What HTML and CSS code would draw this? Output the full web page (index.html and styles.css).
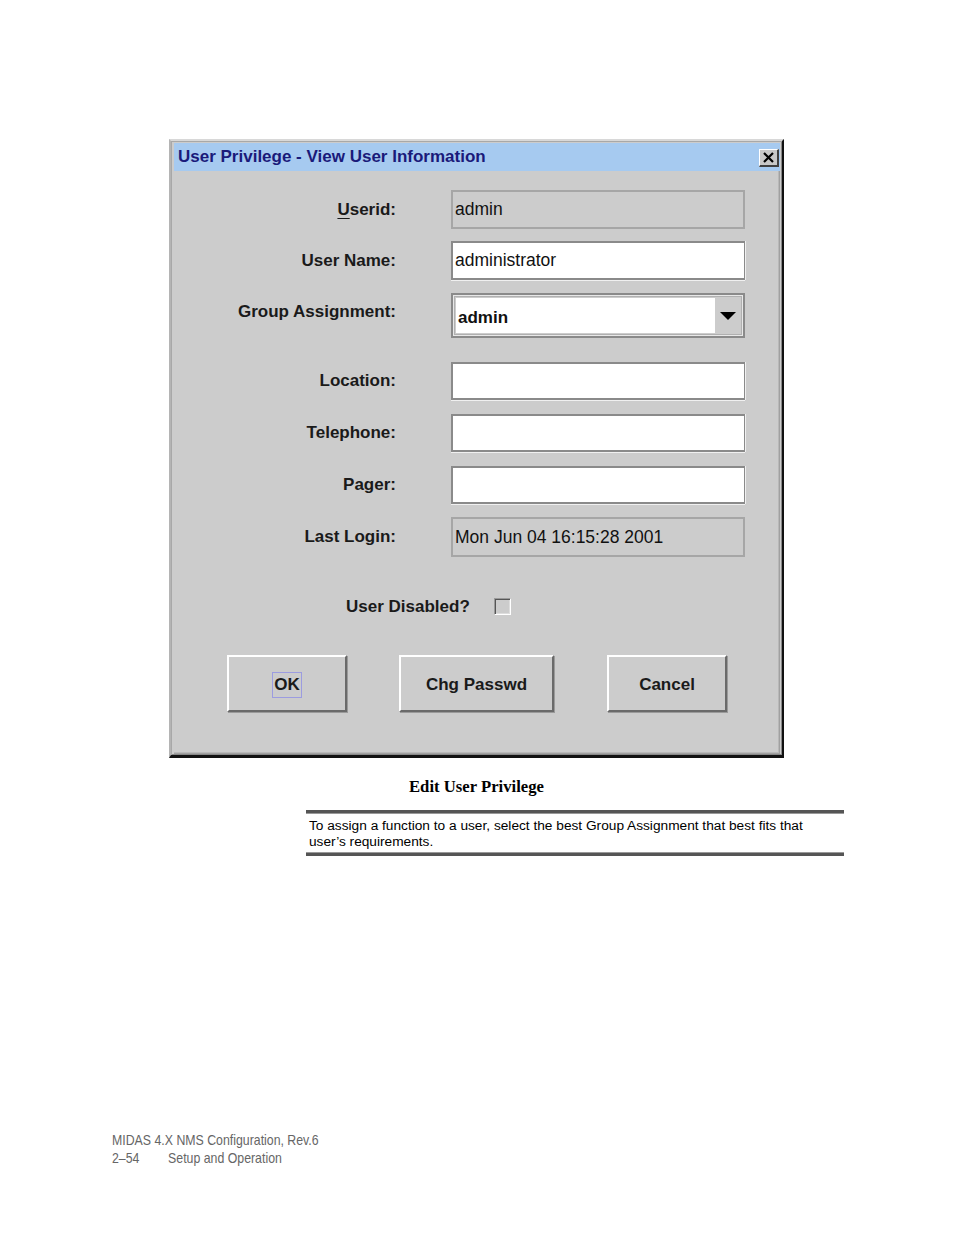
FILE: index.html
```html
<!DOCTYPE html>
<html>
<head>
<meta charset="utf-8">
<link rel="stylesheet" href="styles.css">
</head>
<body>
<div class="page">
  <div class="dialog">
    <div class="titlebar">
      <span class="title">User Privilege - View User Information</span>
      <span class="close"><svg width="16" height="14" viewBox="0 0 16 14"><path d="M3 2 L12 11 M12 2 L3 11" stroke="#000" stroke-width="2.2" fill="none"/></svg></span>
    </div>
    <div class="body">
      <div class="row r1"><div class="label"><u>U</u>serid:</div><div class="field disabled">admin</div></div>
      <div class="row r2"><div class="label">User Name:</div><div class="field">administrator</div></div>
      <div class="row r3"><div class="label lift">Group Assignment:</div>
        <div class="combo"><div class="combo-text">admin</div><div class="combo-btn"><svg width="16" height="9" viewBox="0 0 16 9"><path d="M0 0 H16 L8 8 Z" fill="#000"/></svg></div></div>
      </div>
      <div class="row r4"><div class="label">Location:</div><div class="field"></div></div>
      <div class="row r5"><div class="label">Telephone:</div><div class="field"></div></div>
      <div class="row r6"><div class="label">Pager:</div><div class="field"></div></div>
      <div class="row r7"><div class="label">Last Login:</div><div class="field disabled">Mon Jun 04 16:15:28 2001</div></div>
      <div class="check-row"><span class="check-label">User Disabled?</span><span class="checkbox"></span></div>
      <div class="buttons">
        <div class="btn btn-ok"><span class="focus">OK</span></div>
        <div class="btn btn-chg">Chg Passwd</div>
        <div class="btn btn-cancel">Cancel</div>
      </div>
    </div>
  </div>
  <div class="caption">Edit User Privilege</div>
  <div class="note">
    <p>To assign a function to a user, select the best Group Assignment that best fits that user’s requirements.</p>
  </div>
</div>
<div class="footer">
  <div class="fline">MIDAS 4.X NMS Configuration, Rev.6</div>
  <div class="fline"><span class="pg">2–54</span>Setup and Operation</div>
</div>
</body>
</html>
```

FILE: styles.css
```css
html, body {
  margin: 0;
  padding: 0;
  background: #fff;
}
body {
  width: 954px;
  height: 1235px;
  position: relative;
  font-family: "Liberation Sans", Arial, sans-serif;
}
.page {
  padding-top: 139px;
}
.dialog {
  margin-left: 169px;
  width: 615px;
  height: 619px;
  box-sizing: border-box;
  background: #cccccc;
  border-style: solid;
  border-width: 2px 2px 3px 2px;
  border-color: #d8d8d8 #111 #111 #b4b4b4;
  box-shadow: inset 1px 1px 0 #a8a8a8, inset -1px -1px 0 #888;
  padding: 2px 2px 1px 3px;
  display: flex;
  flex-direction: column;
}
.titlebar {
  height: 28px;
  background: #a6caf0;
  display: flex;
  align-items: center;
  justify-content: space-between;
  padding: 0 1px 0 4px;
  flex: none;
}
.title {
  font-weight: bold;
  font-size: 17px;
  color: #1a1a7a;
}
.close {
  width: 20px;
  height: 18px;
  box-sizing: border-box;
  background: #c8c8c8;
  border-style: solid;
  border-width: 1px 2px 2px 1px;
  border-color: #fff #404040 #404040 #fff;
  display: flex;
  align-items: center;
  justify-content: center;
  margin-top: 2px;
}
.body {
  flex: 1;
  box-shadow: inset -1px -1px 0 #a0a0a0, inset -2px -2px 0 #b8b8b8;
}
.row {
  display: flex;
  align-items: center;
}
.label {
  width: 222px;
  text-align: right;
  font-weight: bold;
  font-size: 17px;
  color: #1a1a1a;
  margin-right: 55px;
}
.label u {
  text-decoration: underline;
  text-underline-offset: 3px;
}
.label.lift {
  position: relative;
  top: -4px;
}
.field {
  width: 294px;
  height: 100%;
  box-sizing: border-box;
  background: #fff;
  border: 2px solid #8a8a8a;
  border-right-width: 1px;
  box-shadow: 0 1px 0 #f0f0f0, 1px 0 0 #f0f0f0;
  font-size: 17.5px;
  color: #111;
  display: flex;
  align-items: center;
  padding-left: 2px;
}
.field.disabled {
  background: #cccccc;
  border: 2px solid #a6a6a6;
  box-shadow: none;
}
.r1 { margin-top: 19px; height: 39px; }
.r2 { margin-top: 12px; height: 39px; }
.r3 { margin-top: 13px; height: 45px; }
.r4 { margin-top: 24px; height: 38px; }
.r5 { margin-top: 14px; height: 38px; }
.r6 { margin-top: 14px; height: 38px; }
.r7 { margin-top: 13px; height: 40px; }
.combo {
  width: 294px;
  height: 100%;
  box-sizing: border-box;
  border: 2px solid #8a8a8a;
  box-shadow: inset 0 0 0 1px #e8e8e8, inset 0 0 0 2px #b0b0b0;
  background: #cccccc;
  display: flex;
  padding: 3px;
}
.combo-text {
  width: 259px;
  background: #fff;
  font-weight: bold;
  font-size: 17px;
  color: #111;
  display: flex;
  align-items: center;
  padding-left: 2px;
  padding-top: 4px;
  box-sizing: border-box;
}
.combo-btn {
  flex: 1;
  display: flex;
  align-items: center;
  justify-content: center;
  padding-top: 2px;
}
.check-row {
  margin-top: 41px;
  margin-left: 172px;
  height: 17px;
  display: flex;
  align-items: center;
}
.check-label {
  font-weight: bold;
  font-size: 17px;
  color: #1a1a1a;
  margin-right: 24px;
}
.checkbox {
  width: 17px;
  height: 17px;
  box-sizing: border-box;
  border-style: solid;
  border-width: 1px;
  border-color: #999 #fff #fff #999;
  box-shadow: inset 1px 1px 0 #555, inset -1px -1px 0 #ddd;
  background: #cccccc;
}
.buttons {
  margin-top: 40px;
  margin-left: 53px;
  display: flex;
  gap: 52px;
}
.btn {
  height: 57px;
  box-sizing: border-box;
  border: 2px solid;
  border-color: #fff #6a6a6a #6a6a6a #fff;
  box-shadow: 1px 1px 0 #9a9a9a;
  background: #cccccc;
  display: flex;
  align-items: center;
  justify-content: center;
  font-weight: bold;
  font-size: 17px;
  color: #1a1a1a;
  padding-top: 2px;
}
.btn-ok { width: 120px; }
.btn-chg { width: 155px; }
.btn-cancel { width: 120px; margin-left: 1px; }
.focus {
  border: 1px solid #9c9ce0;
  padding: 2px 1px;
}
.caption {
  margin-top: 19px;
  margin-left: 169px;
  width: 615px;
  text-align: center;
  font-family: "Liberation Serif", "Times New Roman", serif;
  font-weight: bold;
  font-size: 16.7px;
  color: #000;
}
.note {
  margin-top: 13px;
  margin-left: 306px;
  width: 538px;
  border-top: 3px solid #555;
  border-bottom: 3px solid #555;
  box-shadow: inset 0 1px 0 #999, inset 0 -1px 0 #999;
}
.note p {
  margin: 0;
  padding: 5px 20px 3px 3px;
  font-family: "Liberation Sans", Arial, sans-serif;
  font-size: 13.7px;
  line-height: 16px;
  color: #000;
}
.footer {
  position: absolute;
  left: 112px;
  top: 1131px;
  font-family: "Liberation Sans Narrow", "Liberation Sans", Arial, sans-serif;
  font-size: 14.5px;
  line-height: 18px;
  color: #666;
}
.fline {
  transform: scaleX(0.85);
  transform-origin: left center;
  white-space: nowrap;
}
.pg {
  display: inline-block;
  width: 66px;
}
```
